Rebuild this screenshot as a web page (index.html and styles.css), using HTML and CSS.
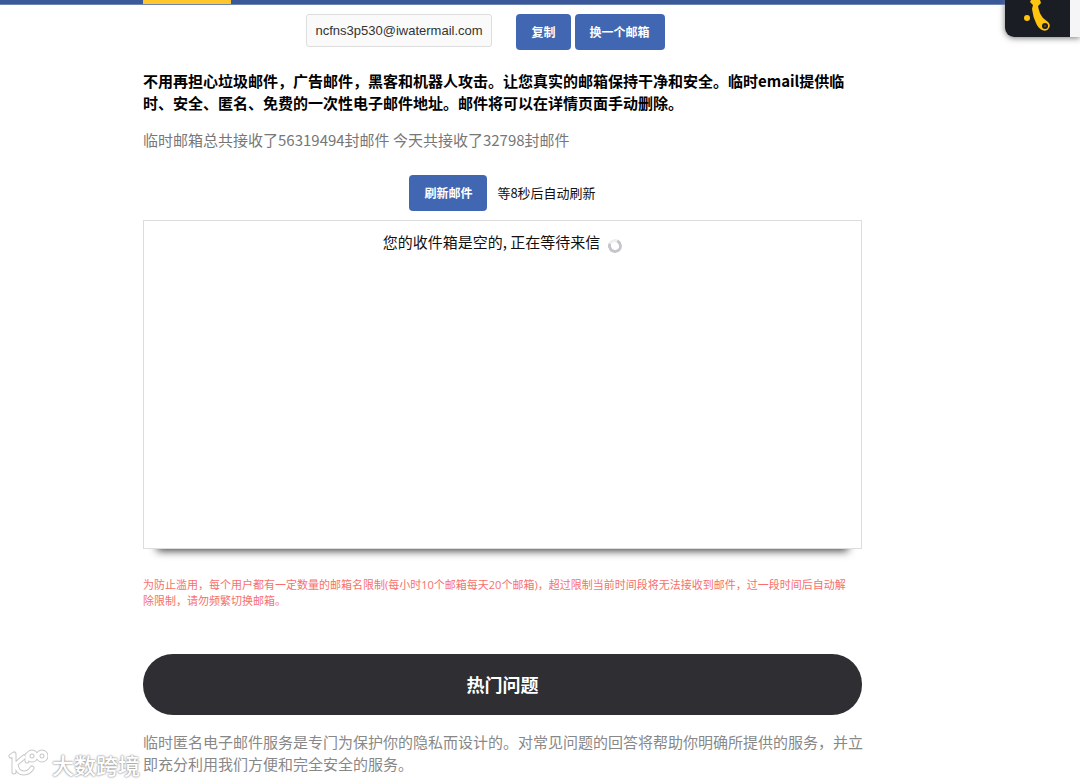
FILE: index.html
```html
<!DOCTYPE html>
<html lang="zh-CN">
<head>
	<meta charset="utf-8">
	<meta name="viewport" content="width=device-width, initial-scale=1">
	<title>临时邮箱</title>
	<link rel="stylesheet" href="styles.css">
</head>
<body>
	<header class="topbar">
		<div class="tab"></div>
	</header>

	<!-- floating call widget -->
	<div class="widget">
		<div class="widget_icon">
			<svg width="64" height="37" viewBox="0 0 64 37" aria-hidden="true">
				<circle cx="22" cy="18" r="3" fill="#ffc40d"/>
				<path d="M26 0 H35 L36 3 L33 6 Q34 13 38 18 L43 22 Q46 25 44 28 Q42 32 37 30 Q33 28 31 23 Q28 17 27 9 L28 5 L25 2 Z" fill="#ffc40d"/>
				<circle cx="40" cy="26" r="3" fill="#1a1d24"/>
				<circle cx="40" cy="26" r="1" fill="#6b5612"/>
			</svg>
		</div>
	</div>

	<main>
		<div class="address">
			<input type="text" id="email" aria-label="邮箱地址" value="ncfns3p530@iwatermail.com" readonly>
			<div class="actions">
				<button type="button">复制</button>
				<button type="button">换一个邮箱</button>
			</div>
		</div>

		<p class="intro">不用再担心垃圾邮件，广告邮件，黑客和机器人攻击。让您真实的邮箱保持干净和安全。临时email提供临<br>时、安全、匿名、免费的一次性电子邮件地址。邮件将可以在详情页面手动删除。</p>
		<p class="stats">临时邮箱总共接收了56319494封邮件 今天共接收了32798封邮件</p>

		<div class="refresh">
			<button type="button">刷新邮件</button>
			<span>等8秒后自动刷新</span>
		</div>

		<section class="inbox">
			<span>您的收件箱是空的, 正在等待来信</span>
			<span class="spinner"></span>
		</section>

		<p class="notice">为防止滥用，每个用户都有一定数量的邮箱名限制(每小时10个邮箱每天20个邮箱)，超过限制当前时间段将无法接收到邮件，过一段时间后自动解<br>除限制，请勿频繁切换邮箱。</p>

		<h2>热门问题</h2>
		<p class="faq">临时匿名电子邮件服务是专门为保护你的隐私而设计的。对常见问题的回答将帮助你明确所提供的服务，并立<br>即充分利用我们方便和完全安全的服务。</p>
	</main>

	<div class="watermark">
		<svg width="40" height="30" viewBox="0 0 40 30" aria-hidden="true">
			<g fill="none" stroke-linecap="round" stroke-linejoin="round">
				<g stroke="#c8c8c8" stroke-width="5">
					<path d="M3 7 L6 5 V23 M16 8 L8 15 Q9 24 16 24 Q21 24 24 19"/>
					<path d="M19 12 V6"/>
					<circle cx="24" cy="7" r="4"/>
					<circle cx="34" cy="7" r="4"/>
				</g>
				<g stroke="#fff" stroke-width="3">
					<path d="M3 7 L6 5 V23 M16 8 L8 15 Q9 24 16 24 Q21 24 24 19"/>
					<path d="M19 12 V6"/>
					<circle cx="24" cy="7" r="4"/>
					<circle cx="34" cy="7" r="4"/>
				</g>
			</g>
		</svg>
		<span>大数跨境</span>
	</div>
</body>
</html>
```
FILE: styles.css
```css
html, body {
	margin: 0;
	padding: 0;
}
body {
	background: #fff;
	color: #111;
	font-family: "Noto Sans CJK SC", sans-serif;
	font-size: 15px;
	line-height: 22px;
	overflow-x: hidden;
}
p {
	margin: 0;
	white-space: nowrap;
}
.topbar {
	height: 4px;
	padding-left: 143px;
	background: #3b5998;
	border-bottom: 1px solid #6f86b5;
}
.tab {
	width: 88px;
	height: 4px;
	background: #ffc72c;
}

main {
	padding: 9px 218px 8px 143px;
}
.address {
	display: flex;
	justify-content: center;
	gap: 24px;
	padding-right: 34px;
}
.address input {
	box-sizing: border-box;
	width: 186px;
	height: 33px;
	padding: 0 8px;
	border: 1px solid #ddd;
	border-radius: 3px;
	background: #fafafa;
	color: #333;
	font: 13px "Liberation Sans", Arial, sans-serif;
}
.actions {
	display: flex;
	gap: 4px;
}
button {
	height: 36px;
	padding: 0 15px 1px;
	border: 0;
	border-radius: 4px;
	background: #4267b2;
	color: #fff;
	font-family: inherit;
	font-size: 12px;
	font-weight: bold;
}

.intro {
	margin-top: 20px;
	color: #000;
	font-weight: bold;
}
.stats {
	margin-top: 15px;
	color: #777;
}
.refresh {
	display: flex;
	justify-content: center;
	align-items: center;
	gap: 10px;
	margin-top: 24px;
	font-size: 13px;
}

/* the shadow only shows under the bottom edge */
.inbox {
	position: relative;
	box-sizing: border-box;
	display: flex;
	justify-content: center;
	align-items: flex-start;
	gap: 8px;
	min-height: 329px;
	margin-top: 9px;
	padding-top: 10px;
	border: 1px solid #ddd;
	background: #fff;
}
.inbox:after {
	content: "";
	position: absolute;
	left: 14px;
	right: 14px;
	bottom: 0;
	z-index: -1;
	height: 20px;
	box-shadow: 0 2px 8px 1px #444;
}
.spinner {
	box-sizing: border-box;
	width: 14px;
	height: 14px;
	margin-top: 8px;
	border: 3px solid #c3c6ca;
	border-top-color: #eee;
	border-radius: 50%;
	transform: rotate(-20deg);
}

.notice {
	margin-top: 28px;
	color: #f7706d;
	font-family: "Open Sans", "Noto Sans CJK SC", sans-serif;
	font-size: 11px;
	line-height: 16px;
}
h2 {
	margin: 45px 0 16px;
	border-radius: 30px;
	background: #2f2e33;
	color: #fff;
	font-size: 18px;
	line-height: 61px;
	text-align: center;
}
.faq {
	color: #888;
}

.widget {
	position: absolute;
	top: 0;
	right: 0;
	width: 75px;
	height: 37px;
	overflow: hidden;
	border-radius: 0 0 0 9px;
	background: #f5f5f7;
	box-shadow: 0 1px 6px #777;
}
.widget_icon {
	width: 65px;
	height: 37px;
	background: #1a1d24;
}
.widget_icon svg {
	display: block;
}
.watermark {
	position: absolute;
	left: 8px;
	bottom: 5px;
	display: flex;
	align-items: center;
	gap: 4px;
	color: #fff;
	font-size: 22px;
	font-weight: 500;
	line-height: 30px;
	text-shadow: 0 0 2px #888, 0 0 2px #aaa;
}
```
